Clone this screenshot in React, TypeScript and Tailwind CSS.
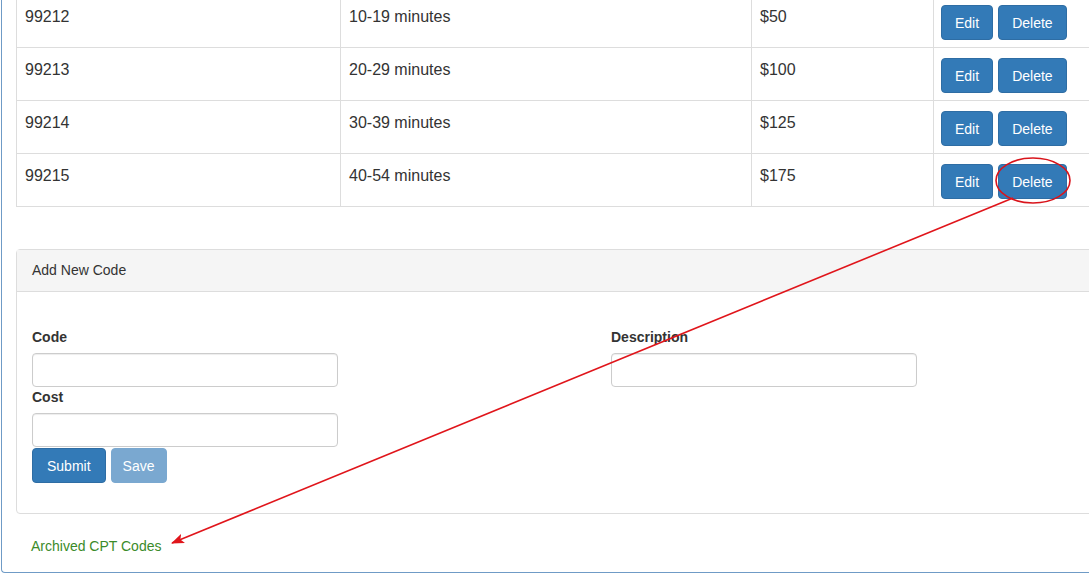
import React from "react";

const rows = [
    { code: "99212", desc: "10-19 minutes", cost: "$50" },
    { code: "99213", desc: "20-29 minutes", cost: "$100" },
    { code: "99214", desc: "30-39 minutes", cost: "$125" },
    { code: "99215", desc: "40-54 minutes", cost: "$175" },
];

const Btn = ({ children, faded, pad = "px-[13px]" }: { children: React.ReactNode; faded?: boolean; pad?: string }) => (
    <button
        className={
            "h-[35px] rounded-[4px] border text-[14px] leading-[20px] text-white " +
            pad +
            " " +
            (faded ? "bg-[#7aa8d0] border-[#7aa8d0]" : "bg-[#337ab7] border-[#2e6da4]")
        }
    >
        {children}
    </button>
);

const Field = ({ label }: { label: string }) => (
    <div>
        <label className="block font-bold text-[14px] leading-[21px] mb-[5px] text-[#333]">{label}</label>
        <input className="block w-[306px] h-[34px] rounded-[4px] border border-[#ccc] bg-white shadow-[inset_0_1px_1px_rgba(0,0,0,0.075)]" />
    </div>
);

const App = () => {
    return (
        <div
            className="relative w-[1089px] h-[576px] overflow-hidden bg-white text-[#333]"
            style={{ fontFamily: '"Liberation Sans", Arial, sans-serif' }}
        >
            <div className="flex flex-col ml-[1px] w-[1120px] h-[573px] border-l border-b border-[#6f9bc6] rounded-bl-[4px] pl-[14px]">
                <table className="-mt-[6px] w-[1100px] border-collapse border border-[#ddd] text-[16px] leading-[22px]">
                    <colgroup>
                        <col className="w-[324px]" />
                        <col className="w-[411px]" />
                        <col className="w-[182px]" />
                        <col />
                    </colgroup>
                    <tbody>
                        {rows.map((r) => (
                            <tr key={r.code} className="h-[53px]">
                                <td className="border border-[#ddd] align-top pt-[11px] px-[8px]">{r.code}</td>
                                <td className="border border-[#ddd] align-top pt-[11px] px-[8px]">{r.desc}</td>
                                <td className="border border-[#ddd] align-top pt-[11px] px-[8px]">{r.cost}</td>
                                <td className="border border-[#ddd] align-top pt-[10px] pb-[7px] px-[7px]">
                                    <div className="flex gap-[5px]">
                                        <Btn>Edit</Btn>
                                        <Btn>Delete</Btn>
                                    </div>
                                </td>
                            </tr>
                        ))}
                    </tbody>
                </table>

                <div className="mt-[42px] w-[1100px] border border-[#ddd] rounded-[4px]">
                    <div className="bg-[#f5f5f5] border-b border-[#ddd] px-[15px] py-[10px] text-[14px] leading-[21px]">
                        Add New Code
                    </div>
                    <div className="px-[15px] pt-[35px] pb-[30px]">
                        <div className="grid grid-cols-[579px_1fr]">
                            <div>
                                <Field label="Code" />
                                <Field label="Cost" />
                                <div className="flex gap-[5px] mt-[1px]">
                                    <Btn pad="px-[14px]">Submit</Btn>
                                    <Btn pad="px-[11px]" faded>Save</Btn>
                                </div>
                            </div>
                            <div>
                                <Field label="Description" />
                            </div>
                        </div>
                    </div>
                </div>

                <div className="mt-[22px] pl-[15px] text-[14px] leading-[20px] text-[#3b8b2a]">Archived CPT Codes</div>
            </div>

            <svg className="absolute inset-0 pointer-events-none" width="1089" height="576">
                <defs>
                    <marker id="ah" markerWidth="13" markerHeight="10" refX="12" refY="5" orient="auto" markerUnits="userSpaceOnUse">
                        <path d="M0,0 L13,5 L0,10 L3,5 Z" fill="#e0151b" />
                    </marker>
                </defs>
                <ellipse cx="1033" cy="180.5" rx="37" ry="22.5" fill="none" stroke="#d9141b" strokeWidth="1.6" />
                <line x1="1013" y1="198" x2="172" y2="543" stroke="#e0151b" strokeWidth="1.6" markerEnd="url(#ah)" />
            </svg>
        </div>
    );
};

export default App;
